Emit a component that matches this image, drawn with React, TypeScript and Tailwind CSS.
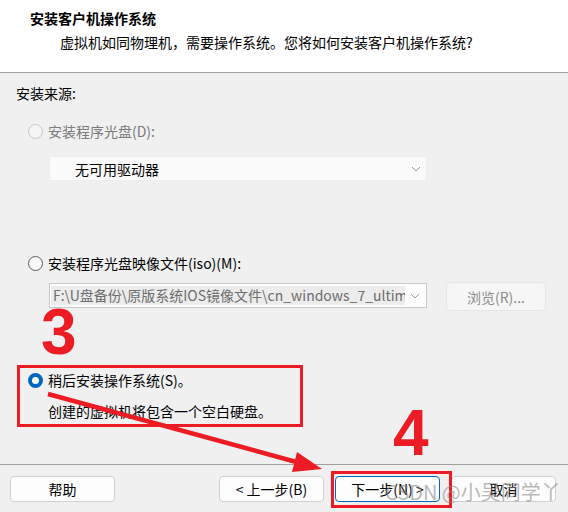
import React from "react";

const cjk = "font-['Noto_Sans_CJK_SC','Noto_Sans',sans-serif]";

function Radio({ state }: { state: "disabled" | "off" | "on" }) {
  if (state === "on") {
    return (
      <span className="w-[15px] h-[15px] rounded-full bg-[#0067c0] flex items-center justify-center shrink-0">
        <span className="w-[7px] h-[7px] rounded-full bg-white" />
      </span>
    );
  }
  return (
    <span
      className={
        state === "disabled"
          ? "w-[15px] h-[15px] rounded-full border border-[#c6c6c6] bg-[#f5f5f5] shrink-0"
          : "w-[15px] h-[15px] rounded-full border border-[#5c5c5c] bg-[#f7f7f7] shrink-0"
      }
    />
  );
}

function Chevron() {
  return (
    <svg width="10" height="6" viewBox="0 0 10 6" className="shrink-0">
      <polyline points="1,1 5,5 9,1" fill="none" stroke="#9a9a9a" strokeWidth="1" />
    </svg>
  );
}

function Btn({ children, primary }: { children: React.ReactNode; primary?: boolean }) {
  return (
    <div
      className={
        "w-[105px] h-[26px] rounded-[4px] bg-[#fdfdfd] flex items-center justify-center text-[14px] leading-[20px] text-black " +
        (primary ? "border border-[#0067c0]" : "border border-[#d0d0d0]")
      }
    >
      {children}
    </div>
  );
}

export default function App() {
  return (
    <div className={`w-[568px] h-[512px] bg-[#f0f0f0] relative overflow-hidden flex flex-col text-[14px] text-black ${cjk}`}>
      {/* header */}
      <div className="h-[73px] bg-white border-b border-[#a0a0a0] pl-[30px] pt-[8px] shrink-0">
        <div className="font-bold leading-[20px]">安装客户机操作系统</div>
        <div className="pl-[30px] mt-[4px] leading-[20px]">虚拟机如同物理机，需要操作系统。您将如何安装客户机操作系统?</div>
      </div>

      {/* content */}
      <div className="pl-[16px] pt-[10px] flex-1">
        <div className="leading-[20px]">安装来源:</div>

        <div className="mt-[18px] h-[20px] pl-[12px] flex items-center gap-[5px]">
          <Radio state="disabled" />
          <span className="leading-[20px] text-[#7a7a7a]">安装程序光盘(D):</span>
        </div>

        <div className="mt-[15px] ml-[33px] w-[378px] h-[25px] bg-[#fafafa] border border-[#ededed] flex items-center pl-[25px] pr-[5px]">
          <span className="flex-1 leading-[20px]">无可用驱动器</span>
          <Chevron />
        </div>

        <div className="mt-[72px] h-[20px] pl-[12px] flex items-center gap-[5px]">
          <Radio state="off" />
          <span className="leading-[20px]">安装程序光盘映像文件(iso)(M):</span>
        </div>

        <div className="mt-[9px] flex items-start">
          <div className="mt-[1px] ml-[33px] w-[378px] h-[25px] bg-[#fdfdfd] border border-[#c9c9c9] flex items-center pr-[6px]">
            <div className="ml-[1px] w-[354px] h-[19px] bg-[#ececec] overflow-hidden whitespace-nowrap pl-[2px] leading-[19px] text-[#6d6d6d]">
              F:\U盘备份\原版系统IOS镜像文件\cn_windows_7_ultimate_with_sp1_x64.iso
            </div>
            <div className="flex-1" />
            <Chevron />
          </div>
          <div className="ml-[19px] w-[100px] h-[29px] rounded-[4px] bg-[#f6f6f6] border border-[#e6e6e6] flex items-center justify-center text-[#8c8c8c] leading-[20px]">
            浏览(R)...
          </div>
        </div>

        <div className="mt-[54px] ml-[1px] w-[286px] h-[62px] border-[3px] border-[#ed1c24] pl-[8px] pt-[2px]">
          <div className="h-[20px] flex items-center gap-[5px]">
            <Radio state="on" />
            <span className="leading-[20px]">稍后安装操作系统(S)。</span>
          </div>
          <div className="mt-[11px] pl-[20px] leading-[20px]">创建的虚拟机将包含一个空白硬盘。</div>
        </div>
      </div>

      {/* footer */}
      <div className="h-[48px] border-t border-[#a0a0a0] pt-[11px] pl-[10px] pr-[12px] flex items-start justify-between shrink-0">
        <Btn>帮助</Btn>
        <div className="flex gap-[11px]">
          <Btn>&lt; 上一步(B)</Btn>
          <Btn primary>下一步(N) &gt;</Btn>
          <Btn>取消</Btn>
        </div>
      </div>

      {/* annotations */}
      <div className="absolute left-[41px] top-[300px] font-['Liberation_Sans',sans-serif] font-bold text-[64px] leading-[64px] text-[#ed1c24]">
        3
      </div>
      <div className="absolute left-[393px] top-[401px] font-['Liberation_Sans',sans-serif] font-bold text-[64px] leading-[64px] text-[#ed1c24]">
        4
      </div>
      <div className="absolute left-[331px] top-[471px] w-[121px] h-[37px] border-[3px] border-[#ed1c24]" />
      <svg className="absolute left-0 top-0 pointer-events-none" width="568" height="512" viewBox="0 0 568 512">
        <line x1="48" y1="394" x2="300" y2="463" stroke="#ed1c24" strokeWidth="4.5" />
        <polygon points="322,469 292,472 297,452" fill="#ed1c24" />
      </svg>
      <div className="absolute left-[385px] top-[479px] text-[20px] leading-[26px] text-[#8a8a8a]/60 whitespace-nowrap">
        CSDN @小吴同学丫
      </div>
    </div>
  );
}
